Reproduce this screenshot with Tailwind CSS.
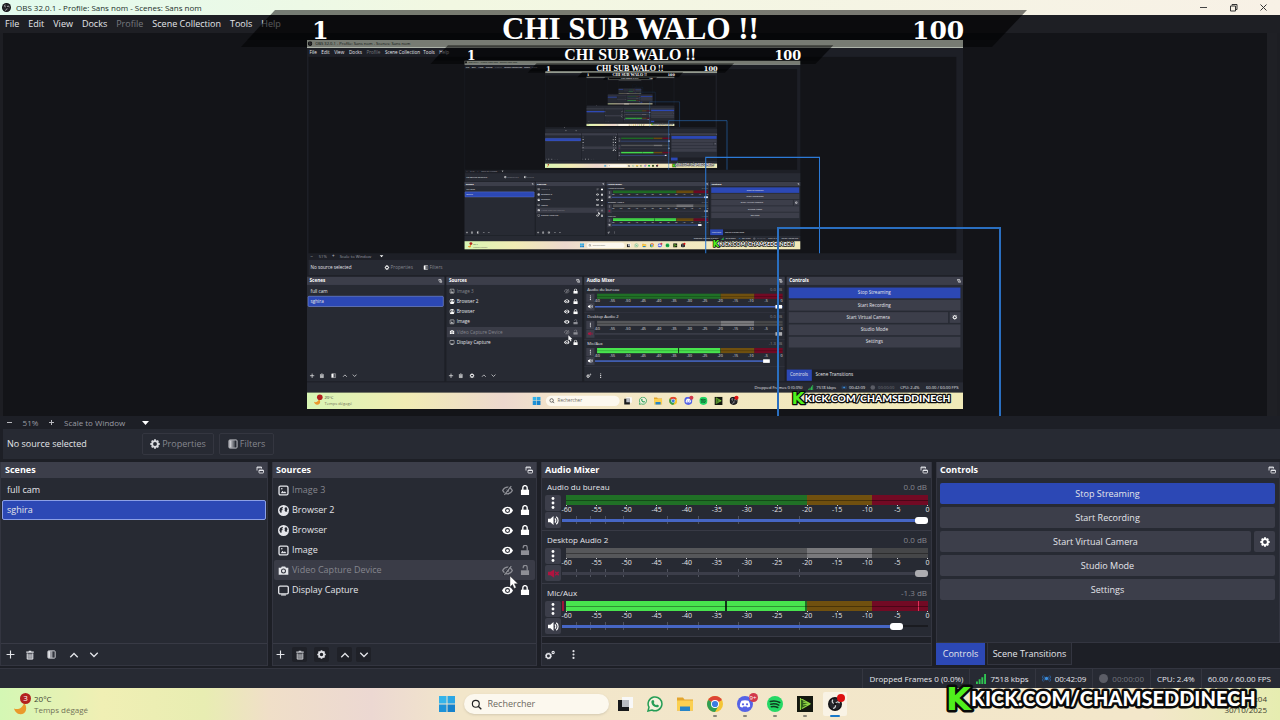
<!DOCTYPE html>
<html lang="fr">
<head>
    <meta charset="UTF-8">
    <meta name="viewport" content="width=device-width, initial-scale=1.0">
    <title>OBS 32.0.1 - Profile: Sans nom - Scenes: Sans nom</title>
    <script src="https://cdn.jsdelivr.net/npm/@tailwindcss/browser@4"></script>
</head>
<body class="bg-[#1d1f26] font-['Open_Sans','Noto_Sans',sans-serif] text-[9px] leading-3 text-[#e4e5ea]">

    <!-- Icon sprite -->
    <svg class="hidden" aria-hidden="true">
        <symbol id="i-plus" viewBox="0 0 16 16"><path d="M8 1v14M1 8h14" stroke="currentColor" stroke-width="2" fill="none"/></symbol>
        <symbol id="i-trash" viewBox="0 0 16 16"><path d="M6 1h4v1.500h4v2H2v-2h4z" fill="currentColor"/><path d="M3.500 5.500v9h9v-9" fill="currentColor" fill-opacity=".45" stroke="currentColor" stroke-width="1.600"/><path d="M6.500 7v5.500M9.500 7v5.500" stroke="currentColor" stroke-width="1.200"/></symbol>
        <symbol id="i-filter" viewBox="0 0 16 16"><rect x="1.500" y="1.500" width="13" height="13" rx="1.500" fill="none" stroke="currentColor" stroke-width="1.500"/><path d="M2 2h4v12H2z" fill="currentColor"/><path d="M6 2h3v12H6z" fill="currentColor" opacity=".6"/><path d="M9 2h2v12H9z" fill="currentColor" opacity=".3"/></symbol>
        <symbol id="i-up" viewBox="0 0 16 16"><path d="M2 11.500l6-6 6 6" stroke="currentColor" stroke-width="2" fill="none"/></symbol>
        <symbol id="i-down" viewBox="0 0 16 16"><path d="M2 4.500l6 6 6-6" stroke="currentColor" stroke-width="2" fill="none"/></symbol>
        <symbol id="i-gear" viewBox="0 0 16 16"><circle cx="8" cy="8" r="4.600" fill="none" stroke="currentColor" stroke-width="3"/><path d="M8 .5v3M8 12.500v3M.5 8h3M12.500 8h3M2.700 2.700l2 2M11.300 11.300l2 2M13.300 2.700l-2 2M4.700 11.300l-2 2" stroke="currentColor" stroke-width="3"/></symbol>
        <symbol id="i-cogs" viewBox="0 0 16 16"><circle cx="5.500" cy="9.500" r="3.600" fill="none" stroke="currentColor" stroke-width="2.600" /><circle cx="5.500" cy="9.500" r="4.900" fill="none" stroke="currentColor" stroke-width="1" stroke-dasharray="2 1.800"/><circle cx="13" cy="4" r="1.800" fill="none" stroke="currentColor" stroke-width="1.800"/></symbol>
        <symbol id="i-dots" viewBox="0 0 16 16"><circle cx="8" cy="2" r="1.900" fill="currentColor"/><circle cx="8" cy="8" r="1.900" fill="currentColor"/><circle cx="8" cy="14" r="1.900" fill="currentColor"/></symbol>
        <symbol id="i-float" viewBox="0 0 16 16"><path d="M2 9V2h9v3M2 3.500h9" stroke="currentColor" stroke-width="1.800" fill="none"/><rect x="6" y="8" width="9" height="6" rx="1" stroke="currentColor" stroke-width="1.800" fill="none"/><path d="M6 9h9" stroke="currentColor" stroke-width="2"/></symbol>
        <symbol id="i-image" viewBox="0 0 16 16"><rect x="1.500" y="1.500" width="13" height="13" rx="2" fill="none" stroke="currentColor" stroke-width="1.900"/><path d="M4 12l2.500-3.500 2 2 1.500-1.500 2.500 3z" fill="currentColor"/><circle cx="5.500" cy="5.500" r="1.200" fill="currentColor"/></symbol>
        <symbol id="i-globe" viewBox="0 0 16 16"><circle cx="8" cy="8" r="8" fill="currentColor"/><path d="M3 4.500l3.500-2 .8 1.500-1.500 1.500 1.200 1.500-2 1.500.5 2-1.500 1L2 8zM9.500 4.500l2.500-1.500 2 3-1.200 1.500.7 1.500-2 1-2-2 .5-1.500z" fill="#272a33"/></symbol>
        <symbol id="i-camera" viewBox="0 0 16 16"><path d="M1 4h3.500l1-2h5l1 2H15v10H1z" fill="currentColor"/><circle cx="8" cy="8.800" r="2.900" fill="none" stroke="#33353f" stroke-width="1.500"/></symbol>
        <symbol id="i-display" viewBox="0 0 16 16"><rect x="1" y="1.500" width="14" height="11.500" rx="2" fill="none" stroke="currentColor" stroke-width="1.900"/><path d="M4.500 14.500h7" stroke="currentColor" stroke-width="1.700"/></symbol>
        <symbol id="i-eye" viewBox="0 0 16 16"><path d="M0 8c2-4 5-5.500 8-5.500S14 4 16 8c-2 4-5 5.500-8 5.500S2 12 0 8z" fill="currentColor"/><circle cx="8" cy="8" r="3.600" fill="#272a33"/><circle cx="8" cy="8" r="2" fill="currentColor"/></symbol>
        <symbol id="i-eye-off" viewBox="0 0 16 16"><path d="M1 8c2-3.800 4.500-4.800 7-4.800S13 4.200 15 8c-2 3.800-4.500 4.800-7 4.800S3 11.800 1 8z" fill="none" stroke="currentColor" stroke-width="1.900"/><circle cx="8" cy="8" r="2.300" fill="currentColor"/><path d="M12 1l-10 14" stroke="#272a33" stroke-width="2"/><path d="M13.500 1.500l-10 13" stroke="currentColor" stroke-width="1.700"/></symbol>
        <symbol id="i-lock" viewBox="0 0 16 16"><path d="M1.500 7.500h13V16h-13z" fill="currentColor"/><path d="M4.500 8V4.500a3.500 3.500 0 0 1 7 0V8" fill="none" stroke="currentColor" stroke-width="2.200"/></symbol>
        <symbol id="i-unlock" viewBox="0 0 16 16"><path d="M1.500 8.500h13V16h-13z" fill="currentColor"/><path d="M11.500 9V3.800a3.200 3.200 0 0 0-6.400 0V5" fill="none" stroke="currentColor" stroke-width="1.900"/></symbol>
        <symbol id="i-speaker" viewBox="0 0 16 16"><path d="M0 5.500h3.500L8 1.500v13L3.500 10.500H0z" fill="currentColor"/><path d="M10 5a4 4 0 0 1 0 6M12 2.500a7 7 0 0 1 0 11" fill="none" stroke="currentColor" stroke-width="1.700"/></symbol>
        <symbol id="i-muted" viewBox="0 0 16 16"><path d="M0 5.500h3.500L9 2v12l-5.500-3.500H0z" fill="currentColor"/><path d="M10.500 5.500l5 5M15.500 5.500l-5 5" stroke="currentColor" stroke-width="2"/></symbol>
        <symbol id="i-obs" viewBox="0 0 16 16"><circle cx="8" cy="8" r="8" fill="#111114"/><circle cx="8" cy="8" r="6.400" fill="#26262b"/><path d="M8 8c-3-.5-4-3-2.500-5M8 8c1.200-2.800 4-3 5.200-1M8 8c1.500 2.500 0 5-2.200 5" fill="none" stroke="#d8d8da" stroke-width="1.400"/><circle cx="8" cy="8" r="1.600" fill="#111114"/></symbol>
        <symbol id="i-windows" viewBox="0 0 16 16"><path d="M0 0h7.500v7.500H0z" fill="#35b4ea"/><path d="M8.500 0H16v7.500H8.500z" fill="#2ba6e4"/><path d="M0 8.500h7.500V16H0z" fill="#1e93d8"/><path d="M8.500 8.500H16V16H8.500z" fill="#1682cc"/></symbol>
        <symbol id="i-search" viewBox="0 0 16 16"><circle cx="7" cy="7" r="5" fill="none" stroke="currentColor" stroke-width="1.700"/><path d="M10.500 10.500L15 15" stroke="currentColor" stroke-width="1.900"/></symbol>
        <symbol id="i-tasks" viewBox="0 0 16 16"><path d="M5 1h11v11H5z" fill="#f8f8f8"/><path d="M1 4h11v11H1z" fill="#17181a"/><path d="M5 4h7v7H5z" fill="#b9bcc2"/></symbol>
        <symbol id="i-whatsapp" viewBox="0 0 16 16"><path d="M1 15l1-3.800A6.900 6.900 0 1 1 4.900 14z" fill="#f4f1dd" stroke="#249d55" stroke-width="1.500"/><path d="M5.300 4.300l1.200-.2.900 2-.7.900c.5 1 1.300 1.800 2.400 2.200l.9-.8 1.900 1c0 1.500-1.200 2-2.200 1.900-3-.4-5-2.600-5.300-4.900-.1-.9.300-1.700.9-2.100z" fill="#249d55"/></symbol>
        <symbol id="i-folder" viewBox="0 0 16 16"><path d="M0 1.500h6l1.500 2H16v11H0z" fill="#e3a52d"/><path d="M0 4.500h16v10H0z" fill="#fbd051"/><path d="M3 10.500h10v4.500H3z" fill="#2684c6"/></symbol>
        <symbol id="i-chrome" viewBox="0 0 16 16"><circle cx="8" cy="8" r="8" fill="#f4c534"/><path d="M8 8L1.100 4A8 8 0 0 1 14.900 4z" fill="#dd4436"/><path d="M8 8L1.100 4A8 8 0 0 0 8 16l3.500-6z" fill="#2f9e53"/><circle cx="8" cy="8" r="4" fill="#fff"/><circle cx="8" cy="8" r="3.100" fill="#3b7ce0"/></symbol>
        <symbol id="i-discord" viewBox="0 0 16 16"><circle cx="8" cy="8" r="8" fill="#5563e6"/><path d="M4.500 4.800C6.500 3.900 9.500 3.900 11.500 4.800c1.200 1.800 1.700 3.800 1.600 5.600-1 .8-1.900 1.100-2.700 1.200l-.7-1H6.300l-.7 1c-.8-.1-1.700-.4-2.700-1.200-.1-1.800.4-3.800 1.600-5.600z" fill="#fff"/><circle cx="6" cy="8.300" r="1.100" fill="#5563e6"/><circle cx="10" cy="8.300" r="1.100" fill="#5563e6"/></symbol>
        <symbol id="i-spotify" viewBox="0 0 16 16"><circle cx="8" cy="8" r="8" fill="#25d865"/><path d="M3.300 5.500c3.300-.9 6.500-.6 9.500 1M3.800 8.200c2.800-.7 5.500-.4 8 .9M4.300 10.700c2.300-.5 4.500-.3 6.500.8" fill="none" stroke="#0f3b20" stroke-width="1.500" stroke-linecap="round"/></symbol>
        <symbol id="i-play" viewBox="0 0 16 16"><path d="M0 0h16v16H0z" fill="#14180f"/><path d="M3 2l11 6-11 6z" fill="#2c5a1b"/><path d="M3.500 2v12M3.500 2.500l10 5.500M6 6l7 2M6 9l6-1M5 12.500l8-4.500" stroke="#8fd443" stroke-width="1.100" fill="none"/></symbol>
        <symbol id="i-bars" viewBox="0 0 16 16"><path d="M0 12h3v4H0zM4.300 8.500h3V16h-3zM8.600 5h3v11h-3zM13 0h3v16h-3z" fill="#2fc552"/></symbol>
        <symbol id="i-live" viewBox="0 0 16 16"><circle cx="8" cy="8" r="3" fill="#3c8fe0"/><path d="M4.800 4.500a5 5 0 0 0 0 7M11.200 4.500a5 5 0 0 1 0 7M2.300 2.500a8 8 0 0 0 0 11M13.700 2.500a8 8 0 0 1 0 11" fill="none" stroke="#2b6cb4" stroke-width="1.500"/></symbol>
        <symbol id="i-moon" viewBox="0 0 16 16"><path d="M1 8c5 2 9-1 11-6 4 5 2 12-4 12-4 0-6-3-7-6z" fill="#ea9a2c"/></symbol>
    </svg>

    <div class="relative flex h-screen min-h-[520px] flex-col overflow-hidden">

        <!-- Title bar -->
        <header class="flex h-[15px] shrink-0 items-center bg-linear-to-r from-[#e2fbee] via-[#f2f8e2] via-35% to-[#f8f1e6] pl-[2px] text-[#23302b]">
            <svg class="size-[9px]"><use href="#i-obs"/></svg>
            <h1 class="ml-[5px] text-[8px]">OBS 32.0.1 - Profile: Sans nom - Scenes: Sans nom</h1>
            <div class="ml-auto flex gap-[21px] pr-[12px]">
                <button aria-label="Minimize"><svg class="size-[9px]" viewBox="0 0 9 9"><path d="M1 4.500h7" stroke="#444" fill="none"/></svg></button>
                <button aria-label="Restore"><svg class="size-[9px]" viewBox="0 0 9 9"><path d="M1.500 3h5v5h-5zM3 2.500v-1h5v5H7" stroke="#333" fill="none"/></svg></button>
                <button aria-label="Close"><svg class="size-[9px]" viewBox="0 0 9 9"><path d="M1.500 1.500l6 6M7.500 1.500l-6 6" stroke="#333" fill="none"/></svg></button>
            </div>
        </header>

        <!-- Menu -->
        <nav class="flex h-[18px] shrink-0 items-center gap-[9px] bg-[#1e1f24] pl-[5px]">
            <a href="#">File</a>
            <a href="#">Edit</a>
            <a href="#">View</a>
            <a href="#">Docks</a>
            <a href="#" class="text-[#77797f]">Profile</a>
            <a href="#">Scene Collection</a>
            <a href="#">Tools</a>
            <a href="#">Help</a>
        </nav>

        <!-- Preview -->
        <main class="flex min-h-0 flex-1 bg-[#1d1e23] pl-[3px]">
            <div class="relative flex flex-1 items-center justify-center overflow-hidden bg-[#131418]">
                <svg id="preview" class="h-[369px] w-[656px]" viewBox="0 0 1280 720"></svg>
                <div class="absolute top-[194px] left-[774px] h-[200px] w-[224px] border-2 border-[#2a6fc0]"></div>
            </div>
            <div class="mr-[3px] w-[10px] bg-[#1f2025]"></div>
        </main>

        <!-- Zoom bar -->
        <div class="flex h-[13px] shrink-0 items-center bg-[#1d1f26] pl-[5px] text-[#9a9ba2]">
            <button aria-label="Zoom out"><svg class="size-[9px]" viewBox="0 0 9 9"><path d="M2 4.500h5" stroke="#b8b9be"/></svg></button>
            <span class="w-[33px] text-center text-[8px]">51%</span>
            <button aria-label="Zoom in"><svg class="size-[9px]" viewBox="0 0 9 9"><path d="M2 4.500h5M4.500 2v5" stroke="#b8b9be"/></svg></button>
            <button class="ml-[8px] flex w-[85px] items-center justify-between text-[8px]">Scale to Window
                <svg class="h-[4px] w-[7px]" viewBox="0 0 7 4"><path d="M0 0h7L3.500 4z" fill="#fff"/></svg>
            </button>
        </div>

        <!-- Source toolbar -->
        <div class="ml-[3px] flex h-[30px] shrink-0 items-center gap-[5px] bg-[#272a33] pl-1">
            <span class="w-[130px]">No source selected</span>
            <button class="flex h-[22px] w-[72px] items-center justify-center gap-[2px] rounded-[2px] border border-[#343640] text-[#85868e]"><svg class="size-[10px] text-[#d8d9de]"><use href="#i-gear"/></svg>Properties</button>
            <button class="flex h-[22px] w-[55px] items-center justify-center gap-[2px] rounded-[2px] border border-[#343640] text-[#85868e]"><svg class="size-[10px] text-[#c8c9ce]"><use href="#i-filter"/></svg>Filters</button>
        </div>

        <!-- Docks -->
        <div class="mt-[3px] grid h-[204px] shrink-0 grid-cols-[268fr_265fr_391fr_344fr] gap-1">

            <section class="flex flex-col border border-t-0 border-[#333540] bg-[#272a33]">
                <div class="flex h-4 items-center justify-between bg-[#3c3e4a] pr-[3px] pl-1">
                    <h2 class="font-bold text-white">Scenes</h2>
                    <button aria-label="Float Scenes"><svg class="size-2"><use href="#i-float"/></svg></button>
                </div>
                <ul class="flex-1 px-px pt-[2px]">
                    <li class="flex h-5 items-center px-[5px]">full cam</li>
                    <li class="flex h-5 items-center rounded-[2px] border border-[#8c9fe6] bg-[#2c48b5] px-1">sghira</li>
                </ul>
                <div class="flex h-[22px] items-center gap-[10px] border-t border-[#383a45] pl-[5px]">
                    <button aria-label="Add scene"><svg class="size-[9px]"><use href="#i-plus"/></svg></button>
                    <button aria-label="Remove scene"><svg class="size-[10px]"><use href="#i-trash"/></svg></button>
                    <button aria-label="Scene filters" class="ml-[2px]"><svg class="size-[9px]"><use href="#i-filter"/></svg></button>
                    <button aria-label="Move scene up" class="ml-[3px]"><svg class="size-[10px]"><use href="#i-up"/></svg></button>
                    <button aria-label="Move scene down"><svg class="size-[10px]"><use href="#i-down"/></svg></button>
                </div>
            </section>

            <section class="relative flex flex-col border border-t-0 border-[#333540] bg-[#272a33]">
                <div class="flex h-4 items-center justify-between bg-[#3c3e4a] pr-[3px] pl-[3px]">
                    <h2 class="font-bold text-white">Sources</h2>
                    <button aria-label="Float Sources"><svg class="size-2"><use href="#i-float"/></svg></button>
                </div>
                <ul id="sources" class="flex-1 px-px pt-[2px]"></ul>
                <div class="flex h-[22px] items-center gap-[4px] border-t border-[#383a45]">
                    <button aria-label="Add source" class="flex size-[15px] items-center justify-center"><svg class="size-[9px]"><use href="#i-plus"/></svg></button>
                    <button aria-label="Remove source" class="flex size-[15px] items-center justify-center rounded-[2px] bg-[#1f2128]"><svg class="size-[10px] text-[#c4c5ca]"><use href="#i-trash"/></svg></button>
                    <button aria-label="Source properties" class="ml-[3px] flex size-[15px] items-center justify-center rounded-[2px] bg-[#1f2128]"><svg class="size-[9px]"><use href="#i-gear"/></svg></button>
                    <button aria-label="Move source up" class="ml-[4px] flex size-[15px] items-center justify-center rounded-[2px] bg-[#1f2128]"><svg class="size-[10px]"><use href="#i-up"/></svg></button>
                    <button aria-label="Move source down" class="flex size-[15px] items-center justify-center rounded-[2px] bg-[#1f2128]"><svg class="size-[10px]"><use href="#i-down"/></svg></button>
                </div>
                <svg class="pointer-events-none absolute top-[114px] left-[237px] h-[13px] w-[9px]" viewBox="0 0 9 13"><path d="M0 0v11l2.500-2.500L4.200 12.500l2-1-1.800-3.700H8z" fill="#fff" stroke="#222" stroke-width=".4"/></svg>
            </section>

            <section class="flex flex-col border border-t-0 border-[#333540] bg-[#272a33]">
                <div class="flex h-4 items-center justify-between bg-[#3c3e4a] pr-[3px] pl-[3px]">
                    <h2 class="font-bold text-white">Audio Mixer</h2>
                    <button aria-label="Float Audio Mixer"><svg class="size-2"><use href="#i-float"/></svg></button>
                </div>
                <div id="mixer" class="flex-1 bg-[#1f2128]"></div>
                <div class="flex h-[22px] items-center gap-[14px] border-t border-[#383a45] pl-[3px]">
                    <button aria-label="Advanced audio properties"><svg class="size-[10px]"><use href="#i-cogs"/></svg></button>
                    <button aria-label="Mixer menu"><svg class="size-[9px]"><use href="#i-dots"/></svg></button>
                </div>
            </section>

            <section class="flex flex-col">
                <div class="flex flex-1 flex-col border border-t-0 border-[#333540] bg-[#272a33]">
                    <div class="flex h-4 items-center justify-between bg-[#3c3e4a] pr-[3px] pl-[3px]">
                        <h2 class="font-bold text-white">Controls</h2>
                        <button aria-label="Float Controls"><svg class="size-2"><use href="#i-float"/></svg></button>
                    </div>
                    <div class="flex flex-col gap-[3px] pt-[5px] pr-1 pl-[3px]">
                        <button class="h-[21px] rounded-[2px] bg-[#2c48b5]">Stop Streaming</button>
                        <button class="h-[21px] rounded-[2px] bg-[#3c3e4a]">Start Recording</button>
                        <div class="flex gap-[3px]">
                            <button class="h-[21px] flex-1 rounded-[2px] bg-[#3c3e4a]">Start Virtual Camera</button>
                            <button aria-label="Virtual camera settings" class="flex h-[21px] w-[21px] items-center justify-center rounded-[2px] bg-[#3c3e4a]"><svg class="size-[10px] text-white"><use href="#i-gear"/></svg></button>
                        </div>
                        <button class="h-[21px] rounded-[2px] bg-[#3c3e4a]">Studio Mode</button>
                        <button class="h-[21px] rounded-[2px] bg-[#3c3e4a]">Settings</button>
                    </div>
                </div>
                <div class="flex h-[23px] gap-[2px]">
                    <button class="h-[22px] w-[49px] bg-[#2c48b5]">Controls</button>
                    <button class="h-[22px] w-[85px] border border-t-0 border-[#333540] bg-[#22242b]">Scene Transitions</button>
                </div>
            </section>
        </div>

        <!-- Status bar -->
        <footer class="mt-[2px] flex h-5 shrink-0 items-center justify-end border-t border-[#333540] bg-[#272a33] pr-[3px] text-[8px] *:flex *:h-full *:items-center *:border-l *:border-[#343640] *:px-[6px]">
            <span>Dropped Frames 0 (0.0%)</span>
            <span class="gap-1"><svg class="size-[10px]"><use href="#i-bars"/></svg>7518 kbps</span>
            <span class="gap-1"><svg class="size-[9px]"><use href="#i-live"/></svg>00:42:09</span>
            <span class="gap-1 text-[#73757d]"><i class="size-[9px] rounded-full bg-[#5b5d66]"></i>00:00:00</span>
            <span>CPU: 2.4%</span>
            <span>60.00 / 60.00 FPS</span>
        </footer>

        <!-- Windows taskbar -->
        <div class="grid h-8 shrink-0 grid-cols-[1fr_auto_1fr] items-center bg-[linear-gradient(90deg,#d4f7b4,#f0efb4_8%,#e8edb2_16%,#f0dfc8_21%,#ecd8d2_29%,#f2e6ca_36%,#f3e7ca_90%,#e6edb0)] text-[#3c3c30]">
            <div class="flex items-start pl-[13px]">
                <div class="relative pt-2">
                    <svg class="size-[15px]"><use href="#i-moon"/></svg>
                    <span class="absolute top-0 left-[7px] flex size-[11px] items-center justify-center rounded-full bg-[#b3211f] text-[8px] text-white">3</span>
                </div>
                <p class="ml-[6px] text-[8px] leading-[11px]">20°C<br><span class="text-[#727258]">Temps dégagé</span></p>
            </div>
            <div class="flex h-full items-center pl-[2px]">
                <button aria-label="Start" class="mr-[2px] flex w-[29px] justify-center"><svg class="size-4"><use href="#i-windows"/></svg></button>
                <label class="mr-px flex h-5 w-[145px] items-center gap-[6px] rounded-full bg-[#fcf8ee] pl-[7px] shadow-sm">
                    <svg class="size-[11px] text-[#222]"><use href="#i-search"/></svg>
                    <input type="text" aria-label="Rechercher" placeholder="Rechercher" class="w-[110px] bg-transparent text-[9px] outline-none placeholder:text-[#6c6a62]">
                </label>
                <div id="apps" class="flex h-full"></div>
            </div>
            <p class="pr-[13px] text-right text-[8px] leading-[11px]">23:04<br>30/10/2025</p>
        </div>

        <!-- Stream overlays drawn over the desktop -->
        <svg id="banner" class="pointer-events-none absolute top-[10px] left-[241px] h-[37px] w-[786px]" viewBox="241 10 786 37"></svg>
        <svg id="watermark" class="pointer-events-none absolute right-0 bottom-0 h-[40px] w-[340px]" viewBox="940 680 340 40"></svg>
    </div>

    <script>
        const sources = [
            { name: 'Image 3', icon: 'image', visible: false, locked: true },
            { name: 'Browser 2', icon: 'globe', visible: true, locked: true },
            { name: 'Browser', icon: 'globe', visible: true, locked: true },
            { name: 'Image', icon: 'image', visible: true, locked: false },
            { name: 'Video Capture Device', icon: 'camera', visible: false, locked: false, hover: true },
            { name: 'Display Capture', icon: 'display', visible: true, locked: true },
        ];
        const channels = [
            { name: 'Audio du bureau', db: '0.0 dB', volume: 100, level: 0 },
            { name: 'Desktop Audio 2', db: '0.0 dB', volume: 100, level: 0, muted: true },
            { name: 'Mic/Aux', db: '-1.3 dB', volume: 93, level: 66 },
        ];
        const apps = [
            { name: 'Task view', icon: 'tasks' },
            { name: 'WhatsApp', icon: 'whatsapp' },
            { name: 'Explorer', icon: 'folder' },
            { name: 'Chrome', icon: 'chrome', open: true },
            { name: 'Discord', icon: 'discord', open: true, badge: '9+' },
            { name: 'Spotify', icon: 'spotify', open: true },
            { name: 'Player', icon: 'play', open: true },
            { name: 'OBS', icon: 'obs', active: true },
        ];
        const scale = [-60, -55, -50, -45, -40, -35, -30, -25, -20, -15, -10, -5, 0];
        const faders = [14, 28, 43, 61, 105, 136, 176, 237];

        // Dock lists
        document.getElementById('sources').innerHTML = sources.map(s => `
            <li class="flex h-5 items-center rounded-[2px] pr-[5px] pl-1 ${s.hover ? 'bg-[#3a3c47]' : ''}">
                <svg class="size-[11px]"><use href="#i-${s.icon}"/></svg>
                <span class="ml-[3px] flex-1 ${s.visible ? '' : 'text-[#85868e]'}">${s.name}</span>
                <button aria-label="Visibility"><svg class="size-[11px] ${s.visible ? 'text-white' : 'text-[#8e8f96]'}"><use href="#i-${s.visible ? 'eye' : 'eye-off'}"/></svg></button>
                <button aria-label="Lock" class="ml-[7px]"><svg class="size-[10px] ${s.locked ? 'text-white' : 'text-[#8e8f96]'}"><use href="#i-${s.locked ? 'lock' : 'unlock'}"/></svg></button>
            </li>`).join('');

        document.getElementById('mixer').innerHTML = channels.map((c, i) => `
            <div class="h-[53px] border-b border-[#383a45] bg-[#272a33] px-[3px] pt-[3px]">
                <div class="flex justify-between pr-px pl-[2px]"><label for="vol${i}" class="text-[8px]">${c.name}</label><span class="text-[8px] text-[#85868e]">${c.db}</span></div>
                <div class="flex gap-px">
                    <div class="flex flex-col gap-px pt-[2px]">
                        <button aria-label="${c.name} menu" class="flex size-4 items-center justify-center rounded-[2px] bg-[#3c3e4a]"><svg class="size-[12px] text-white"><use href="#i-dots"/></svg></button>
                        <button aria-label="Mute ${c.name}" class="flex size-4 items-center justify-center rounded-[2px] bg-[#3c3e4a]"><svg class="size-[11px] ${c.muted ? 'text-[#b01440]' : 'text-white'}"><use href="#i-${c.muted ? 'muted' : 'speaker'}"/></svg></button>
                    </div>
                    <div class="flex-1 pt-[2px]">
                        <div class="relative ml-1 flex h-[10px]">
                            <div class="w-2/3 ${c.muted ? 'bg-[#56575a]' : 'bg-[#207026]'}"></div>
                            <div class="w-[18%] ${c.muted ? 'bg-[#79797c]' : 'bg-[#70500f]'}"></div>
                            <div class="flex-1 ${c.muted ? 'bg-[#454648]' : 'bg-[#720a24]'}"></div>
                            ${c.level ? `<div class="absolute inset-y-0 left-0 bg-[#48e44e]" style="width:${c.level}%"></div>
                            <div class="absolute inset-y-0 left-[44%] w-[2px] bg-[#12351a]"></div>
                            <div class="absolute inset-y-0 right-[9px] w-px bg-[#e0305a]"></div>
                            <div class="absolute inset-y-0 -left-1 w-[2px] bg-[#a01438]"></div>` : ''}
                            <div class="absolute inset-x-0 top-[5px] h-px bg-black/35"></div>
                        </div>
                        <div class="-mr-1 flex h-[9px] justify-between text-[7px] leading-[7px]">
                            ${scale.map(n => `<span class="flex w-[9px] flex-col items-center"><i class="h-px w-px shrink-0 bg-[#c8c9ce]"></i>${n}</span>`).join('')}
                        </div>
                        <div class="relative flex h-[12px] items-center">
                            ${faders.map(x => `<i class="absolute top-[2px] h-2 w-px bg-[#50535f]" style="left:${(x / 366 * 100).toFixed(1)}%"></i>`).join('')}
                            <div class="absolute inset-x-0 h-[2px] bg-[#1a1b20]"></div>
                            <div class="absolute left-0 h-[3px] ${c.muted ? 'bg-[#3c3e4a]' : 'bg-[#4666c4]'}" style="width:${c.volume}%"></div>
                            <input id="vol${i}" type="range" value="${c.volume}" class="relative h-[12px] w-full appearance-none bg-transparent [&::-webkit-slider-thumb]:h-[7px] [&::-webkit-slider-thumb]:w-[13px] [&::-webkit-slider-thumb]:appearance-none [&::-webkit-slider-thumb]:rounded-[3px] ${c.muted ? '[&::-webkit-slider-thumb]:bg-[#acacb0]' : '[&::-webkit-slider-thumb]:bg-white'}">
                        </div>
                    </div>
                </div>
            </div>`).join('');

        document.getElementById('apps').innerHTML = apps.map(a => `
            <button aria-label="${a.name}" class="relative flex h-full w-[30px] items-center justify-center">
                ${a.active ? '<i class="absolute inset-x-[3px] inset-y-1 rounded-[2px] bg-white/50"></i>' : ''}
                <svg class="relative ${a.icon === 'obs' ? 'size-[14px]' : 'size-4'}"><use href="#i-${a.icon}"/></svg>
                ${a.badge ? `<span class="absolute top-[5px] right-[2px] flex size-[9px] items-center justify-center rounded-full bg-[#d2394c] text-[6px] text-white">${a.badge}</span>` : ''}
                ${a.active ? '<i class="absolute top-[6px] right-[5px] size-2 rounded-full bg-[#dd1010]"></i><i class="absolute bottom-[3px] h-[2px] w-[10px] rounded-full bg-[#1878c8]"></i>' : ''}
                ${a.open ? '<i class="absolute bottom-[3px] h-[2px] w-1 rounded-full bg-[#8a8578]"></i>' : ''}
            </button>`).join('');

        // Overlay drawings, in 1280x720 desktop coordinates
        const banner = () => `
            <path d="M275 10H1027L992 47H241z" fill="#000" fill-opacity=".5"/>
            <path d="M270 15H1022L998 40H247z" fill="#000" fill-opacity=".25"/>
            <g fill="#fff" font-weight="700">
                <text x="312" y="39" font-family="DejaVu Serif" font-size="24">1</text>
                <text x="502" y="39" font-family="Liberation Serif" font-size="31">CHI SUB WALO !!</text>
                <text x="912" y="39" font-family="DejaVu Serif" font-size="25">100</text>
            </g>`;
        const watermark = () => `
            <g stroke="#0a0a0a" stroke-linejoin="round" paint-order="stroke">
                <text x="946" y="710" font-family="DejaVu Sans" font-weight="700" font-size="32" fill="#4ff01c" stroke-width="5">K</text>
                <text x="971" y="706" font-family="Lato" font-weight="900" font-size="20" fill="#fff" stroke-width="5">KICK.COM/CHAMSEDDINECH</text>
            </g>`;

        const box = (x, y, w, h, fill) => `<rect x="${x}" y="${y}" width="${w}" height="${h}" fill="${fill}"/>`;
        const icon = (name, x, y, size = 10, color = '#fff') => `<use href="#i-${name}" x="${x - size / 2}" y="${y - size / 2}" width="${size}" height="${size}" color="${color}"/>`;

        // The captured desktop shows OBS, whose preview shows the desktop again
        function desktop(depth) {
            const bold = 'font-weight="700"';
            const mid = 'text-anchor="middle"';
            const end = 'text-anchor="end"';
            const small = 'font-size="8"';
            // labels are unreadable specks from the third level on
            const text = (x, y, s, fill = '#e4e5ea', attrs = '') => depth > 2 ? '' : `<text x="${x}" y="${y + 3}" fill="${fill}" ${attrs}>${s}</text>`;

            let out = box(0, 0, 1280, 720, '#1d1f26') + box(0, 0, 1280, 15, '#eef7e6') + box(3, 33, 1264, 383, '#131418');

            out += icon('obs', 6, 7, 9) + text(16, 7, 'OBS 32.0.1 - Profile: Sans nom - Scenes: Sans nom', '#23302b', small);
            [[5, 'File'], [28, 'Edit'], [53, 'View'], [82, 'Docks'], [116, 'Profile'], [152, 'Scene Collection'], [227, 'Tools'], [258, 'Help']]
                .forEach(([x, s]) => out += text(x, 24, s, s === 'Profile' ? '#77797f' : '#e4e5ea'));
            out += text(7, 422, '−', '#b8b9be') + text(23, 422, '51%', '#9a9ba2', small) + text(49, 422, '+', '#b8b9be')
                + text(64, 422, 'Scale to Window', '#9a9ba2', small) + '<path d="M142 420h7l-3.500 4z" fill="#fff"/>';

            out += box(3, 429, 1277, 30, '#272a33');
            [[0, 268, 'Scenes'], [272, 265, 'Sources'], [541, 391, 'Audio Mixer'], [936, 344, 'Controls']].forEach(([x, w, s]) => {
                out += box(x, 462, w, s === 'Controls' ? 181 : 204, '#272a33') + box(x, 462, w, 16, '#3c3e4a') + text(x + 5, 470, s, '#fff', bold) + icon('float', x + w - 8, 470, 8);
            });
            out += '<rect x="2" y="500" width="264" height="20" rx="2" fill="#2c48b5" stroke="#8c9fe6"/>' + text(7, 490, 'full cam') + text(7, 510, 'sghira');
            out += text(7, 444, 'No source selected') + icon('gear', 156, 444) + text(163, 444, 'Properties', '#85868e') + icon('filter', 232, 444) + text(239, 444, 'Filters', '#85868e');

            out += box(273, 560, 263, 20, '#3a3c47');
            sources.forEach((s, i) => {
                const y = 490 + i * 20;
                out += icon(s.icon, 283, y) + text(292, y, s.name, s.visible ? '#e4e5ea' : '#85868e')
                    + icon(s.visible ? 'eye' : 'eye-off', 507, y, 11, s.visible ? '#fff' : '#8e8f96')
                    + icon(s.locked ? 'lock' : 'unlock', 524, y, 10, s.locked ? '#fff' : '#8e8f96');
            });
            ['plus', 'trash', 'filter', 'up', 'down'].forEach((n, i) => out += icon(n, [10, 29, 52, 74, 93][i], 655));
            ['plus', 'trash', 'gear', 'up', 'down'].forEach((n, i) => out += icon(n, [281, 300, 322, 345, 364][i], 655));
            out += '<path d="M510 576v11l2.500-2.500 1.700 4 2-1-1.800-3.700h3.600z" fill="#fff"/>';

            channels.forEach((c, i) => {
                const y = 487 + i * 53;
                out += text(547, y, c.name, '#e4e5ea', small) + text(927, y, c.db, '#85868e', `${end} ${small}`)
                    + box(545, y + 8, 16, 16, '#3c3e4a') + box(545, y + 25, 16, 16, '#3c3e4a')
                    + icon('dots', 553, y + 16) + icon(c.muted ? 'muted' : 'speaker', 553, y + 33, 10, c.muted ? '#b01440' : '#fff')
                    + box(566, y + 8, 241, 10, c.muted ? '#56575a' : '#207026')
                    + box(807, y + 8, 66, 10, c.muted ? '#79797c' : '#70500f')
                    + box(873, y + 8, 55, 10, c.muted ? '#454648' : '#720a24')
                    + (c.level ? box(566, y + 8, 240, 10, '#48e44e') + box(724, y + 8, 2, 10, '#12351a') : '')
                    + box(566, y + 13, 362, 1, '#0006')
                    + box(562, y + 32, c.volume * 3.66, 3, c.muted ? '#3c3e4a' : '#4666c4')
                    + box(c.level ? 890 : 914, y + 30, 13, 7, c.muted ? '#acacb0' : '#fff')
                    + box(541, y + 44, 391, 1, '#383a45');
                scale.forEach((n, k) => out += text(566 + k * 30, y + 22, n, '#e4e5ea', `${mid} font-size="7"`));
            });
            out += icon('cogs', 550, 655) + icon('dots', 573, 655);

            ['Stop Streaming', 'Start Recording', 'Start Virtual Camera', 'Studio Mode', 'Settings'].forEach((s, i) => {
                out += box(940, 483 + i * 24, i === 2 ? 311 : 335, 21, i ? '#3c3e4a' : '#2c48b5') + text(i === 2 ? 1095 : 1107, 493 + i * 24, s, '#e4e5ea', mid);
            });
            out += box(1254, 531, 21, 21, '#3c3e4a') + icon('gear', 1264, 541);
            out += box(936, 643, 49, 22, '#2c48b5') + text(960, 653, 'Controls', '#e4e5ea', mid) + text(1029, 653, 'Scene Transitions', '#e4e5ea', mid);

            const status = `${end} ${small}`;
            out += box(0, 668, 1280, 20, '#272a33') + text(967, 678, 'Dropped Frames 0 (0.0%)', '#e4e5ea', status) + icon('bars', 983, 678)
                + text(1032, 678, '7518 kbps', '#e4e5ea', status) + icon('live', 1048, 678) + text(1089, 678, '00:42:09', '#e4e5ea', status)
                + '<circle cx="1104" cy="678" r="4.500" fill="#5b5d66"/>' + text(1146, 678, '00:00:00', '#73757d', status)
                + text(1195, 678, 'CPU: 2.4%', '#e4e5ea', status) + text(1271, 678, '60.00 / 60.00 FPS', '#e4e5ea', status);

            out += box(0, 688, 1280, 32, 'url(#bar)') + icon('moon', 20, 706, 15) + '<circle cx="25" cy="697" r="5.500" fill="#b3211f"/>'
                + text(34, 698, '20°C', '#3c3c30', small) + text(34, 709, 'Temps dégagé', '#727258', small) + icon('windows', 448, 704, 16)
                + '<rect x="466" y="694" width="144" height="20" rx="10" fill="#fcf8ee"/>' + icon('search', 478, 704, 11, '#222') + text(489, 704, 'Rechercher', '#6c6a62');
            apps.forEach((a, i) => out += icon(a.icon, 626 + i * 29.5, 704, 16));
            out += '<circle cx="750" cy="698" r="4" fill="#d2394c"/><circle cx="838" cy="698" r="4" fill="#d11"/>';

            if (depth < 6) {
                out += `<svg x="307" y="40" width="656" height="369" viewBox="0 0 1280 720">${desktop(depth + 1)}</svg>`;
            }
            out += '<path d="M778 416V229H1000V416" fill="none" stroke="#2c7ad6" stroke-width="2"/>';
            return out + (depth < 5 ? banner() + watermark() : '');
        }

        document.getElementById('banner').innerHTML = banner();
        document.getElementById('watermark').innerHTML = watermark();
        document.getElementById('preview').innerHTML = `
            <defs><linearGradient id="bar"><stop stop-color="#d8f6b4"/><stop offset=".15" stop-color="#f1ecb4"/><stop offset=".3" stop-color="#edd8ce"/><stop offset=".4" stop-color="#f3e6c8"/><stop offset="1" stop-color="#f0eab8"/></linearGradient></defs>
            <g font-size="9">${desktop(1)}</g>`;
    </script>
</body>
</html>
